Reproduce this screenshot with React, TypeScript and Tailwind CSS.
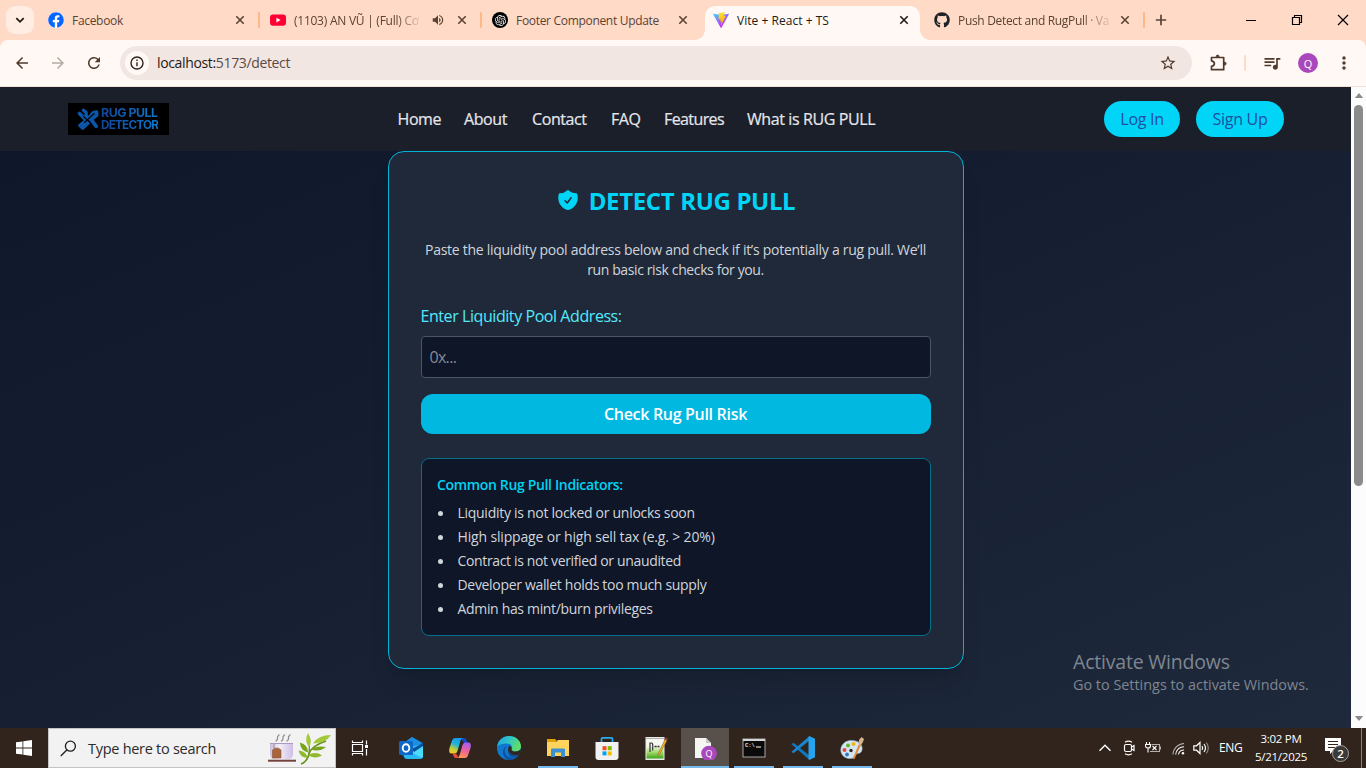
import React from "react";
import { HiShieldCheck } from "react-icons/hi2";
import { FaGithub, FaFacebook } from "react-icons/fa";
import { SiOpenai } from "react-icons/si";
import {
  MdArrowBack,
  MdArrowForward,
  MdRefresh,
  MdStarBorder,
  MdQueueMusic,
  MdMoreVert,
  MdVolumeUp,
} from "react-icons/md";

/* ---------- Browser icons ---------- */

function CloseX({ className = "" }: { className?: string }) {
  return (
    <svg viewBox="0 0 16 16" className={"h-4 w-4 shrink-0 " + className} fill="none" stroke="currentColor" strokeWidth="1.6">
      <path d="M4.3 4.3l7.4 7.4M11.7 4.3l-7.4 7.4" />
    </svg>
  );
}

function YoutubeIcon() {
  return (
    <svg viewBox="0 0 16 16" className="h-4 w-4 shrink-0">
      <rect x="0" y="2.4" width="16" height="11.4" rx="3" fill="#ff0033" />
      <path d="M6.4 5.7v4.8l4.2-2.4z" fill="#fff" />
    </svg>
  );
}

function ViteIcon() {
  return (
    <svg viewBox="0 0 256 257" className="h-4 w-4 shrink-0">
      <defs>
        <linearGradient id="viteA" x1="0%" x2="58%" y1="8%" y2="79%">
          <stop offset="0%" stopColor="#41D1FF" />
          <stop offset="100%" stopColor="#BD34FE" />
        </linearGradient>
        <linearGradient id="viteB" x1="43%" x2="50%" y1="2%" y2="89%">
          <stop offset="0%" stopColor="#FFEA83" />
          <stop offset="8%" stopColor="#FFDD35" />
          <stop offset="100%" stopColor="#FFA800" />
        </linearGradient>
      </defs>
      <path
        fill="url(#viteA)"
        d="M255.153 37.938L134.897 252.976c-2.483 4.44-8.862 4.466-11.382.048L.875 37.958c-2.746-4.814 1.371-10.646 6.827-9.67l120.385 21.517a6.537 6.537 0 0 0 2.322-.004l117.867-21.483c5.438-.991 9.574 4.796 6.877 9.62Z"
      />
      <path
        fill="url(#viteB)"
        d="M185.432.063L96.44 17.501a3.268 3.268 0 0 0-2.634 3.014l-5.474 92.456a3.268 3.268 0 0 0 3.997 3.378l24.777-5.718c2.318-.535 4.413 1.507 3.936 3.838l-7.361 36.047c-.495 2.426 1.782 4.5 4.151 3.78l15.304-4.649c2.372-.72 4.652 1.36 4.15 3.788l-11.698 56.621c-.732 3.542 3.979 5.473 5.943 2.437l1.313-2.028l72.516-144.72c1.215-2.423-.88-5.186-3.54-4.672l-25.505 4.922c-2.396.462-4.435-1.77-3.759-4.114l16.646-57.705c.677-2.35-1.37-4.583-3.769-4.113Z"
      />
    </svg>
  );
}

function PuzzleIcon() {
  return (
    <svg viewBox="0 0 18 18" className="h-[18px] w-[18px]" fill="none" stroke="#4f3a2c" strokeWidth="1.7" strokeLinejoin="round">
      <path d="M2.5 3.5h12.2v12.2H2.5v-3.4c2.2-.3 2.9-1.400 2.9-2.700S4.700 7.200 2.500 6.800z" />
      <path d="M7 2.700a1.600 1.600 0 0 1 3.200 0zM15.500 8a1.600 1.600 0 0 1 0 3.200z" fill="#4f3a2c" strokeWidth=".8" />
    </svg>
  );
}

/* ---------- Browser chrome ---------- */

function Tab({
  icon,
  title,
  audio,
  className,
  fade,
  textClass = "tracking-[-0.31px]",
}: {
  icon: React.ReactNode;
  title: string;
  audio?: boolean;
  className: string;
  fade?: boolean;
  textClass?: string;
}) {
  return (
    <div className={"flex h-7 shrink-0 items-center " + className}>
      {icon}
      <span className="ml-2 min-w-0 flex-1 whitespace-nowrap pt-px text-[12px] leading-4">
        <span
          className={
            "inline-block " + textClass + (fade ? " [mask-image:linear-gradient(to_right,#000_82%,rgba(0,0,0,.15)_100%)]" : "")
          }
        >
          {title}
        </span>
      </span>
      {audio && <MdVolumeUp className="mr-[9px] h-[14px] w-[14px] shrink-0" />}
      <CloseX />
    </div>
  );
}

function Separator() {
  return <div className="ml-[10px] h-4 w-[2px] shrink-0 rounded bg-[#ffb787]" />;
}

function TabStrip() {
  return (
    <div className="flex h-10 items-start bg-[#ffdbc7] text-[#5a4334]">
      <div className="ml-[6px] mt-[6px] flex h-7 w-7 items-center justify-center rounded-[9px] bg-[#ffede4]">
        <svg viewBox="0 0 10 10" className="h-[10px] w-[10px]" fill="none" stroke="#241a14" strokeWidth="1.8">
          <path d="M1.300 3.200L5 6.800l3.700-3.600" />
        </svg>
      </div>
      <div className="mt-[6px] flex h-7 w-[228px] items-center pl-[14px]">
        <Tab
          className="w-[200px]"
          icon={
            <span className="flex h-4 w-4 shrink-0 items-center justify-center rounded-full bg-white">
              <FaFacebook className="h-4 w-4 text-[#0866ff]" />
            </span>
          }
          title="Facebook"
        />
        <Separator />
      </div>
      <div className="mt-[6px] flex h-7 w-[222px] items-center pl-2">
        <Tab className="w-[200px]" icon={<YoutubeIcon />} title="(1103) AN VŨ | (Full) Cơ" audio fade textClass="tracking-[-0.25px]" />
        <Separator />
      </div>
      <div className="mt-[6px] flex h-7 w-[221px] items-center pl-2">
        <Tab
          className="w-[199px]"
          icon={
            <span className="flex h-4 w-4 shrink-0 items-center justify-center rounded-full bg-black">
              <SiOpenai className="h-[11px] w-[11px] text-white" />
            </span>
          }
          title="Footer Component Update"
        />
      </div>
      <div className="relative flex h-[34px] w-[215px] self-end rounded-t-[10px] bg-[#fff8f5] px-2 text-[#241a14]">
        <div className="absolute -left-[10px] bottom-0 h-[10px] w-[10px] bg-[radial-gradient(circle_at_0_0,#ffdbc7_9.5px,#fff8f5_10px)]" />
        <div className="absolute -right-[10px] bottom-0 h-[10px] w-[10px] bg-[radial-gradient(circle_at_100%_0,#ffdbc7_9.5px,#fff8f5_10px)]" />
        <Tab className="w-full" icon={<ViteIcon />} title="Vite + React + TS" textClass="tracking-[0.03px]" />
      </div>
      <div className="mt-[6px] flex h-7 w-[225px] items-center pl-[14px]">
        <Tab
          className="w-[199px]"
          icon={<FaGithub className="h-4 w-4 shrink-0 text-[#1f2328]" />}
          title="Push Detect and RugPull · Va"
          fade
          textClass="tracking-[-0.32px]"
        />
        <Separator />
      </div>
      <svg viewBox="0 0 12 12" className="ml-[10px] mt-[14px] h-3 w-3" stroke="#5a4334" strokeWidth="1.7">
        <path d="M6 .8v10.400M.8 6h10.400" />
      </svg>
      <div className="ml-auto mr-[17px] mt-[14px] flex gap-[34px] text-black">
        <svg viewBox="0 0 12 12" className="h-3 w-3" fill="none" stroke="currentColor">
          <path d="M1 6.500h10" />
        </svg>
        <svg viewBox="0 0 12 12" className="h-3 w-3" fill="none" stroke="currentColor" strokeWidth="1.200">
          <path d="M1.500 3.500h7v7h-7zM3.500 3.500v-2h7v7h-2" />
        </svg>
        <svg viewBox="0 0 12 12" className="h-3 w-3" fill="none" stroke="currentColor" strokeWidth="1.200">
          <path d="M1 1l10 10M11 1L1 11" />
        </svg>
      </div>
    </div>
  );
}

function Toolbar() {
  return (
    <div className="bg-[#ffdbc7]">
      <div className="flex h-[47px] items-center rounded-t-[8px] border-b border-[#f3dfd5] bg-[#fff8f5] text-[#4f3a2c]">
        <MdArrowBack className="ml-[13px] h-[18px] w-[18px]" />
        <MdArrowForward className="ml-[18px] h-[18px] w-[18px] text-[#b5a9a2]" />
        <MdRefresh className="ml-[18px] h-[18px] w-[18px]" />
        <div className="ml-[17px] flex h-[34px] w-[1072px] items-center rounded-full bg-[#f2e6e3] pl-[5px]">
          <div className="flex h-6 w-6 items-center justify-center rounded-full bg-[#fff8f5]">
            <svg viewBox="0 0 14 14" className="h-[14px] w-[14px]" fill="none" stroke="#30241e" strokeWidth="1.400">
              <circle cx="7" cy="7" r="6" />
              <path d="M7 6.200v4M7 3.600v1.500" />
            </svg>
          </div>
          <span className="ml-2 text-[14px] leading-5 tracking-[-0.35px] text-[#5a4b44]">
            <span className="text-[#1f1a17]">localhost:</span>5173/detect
          </span>
          <MdStarBorder className="ml-auto mr-[15px] h-[18px] w-[18px]" />
        </div>
        <div className="ml-[17px]">
          <PuzzleIcon />
        </div>
        <div className="ml-[17px] h-4 w-[2px] rounded bg-[#ffdbc7]" />
        <MdQueueMusic className="ml-[16px] h-5 w-5" />
        <div className="ml-[16px] flex h-5 w-5 items-center justify-center rounded-full bg-[#ab47bc] text-[11px] leading-none text-white">Q</div>
        <MdMoreVert className="ml-[16px] h-5 w-5" />
      </div>
    </div>
  );
}

/* ---------- Page ---------- */

function Logo() {
  return (
    <div className="ml-[68px] flex h-8 w-[101px] items-center bg-black pl-[9px]">
      <svg viewBox="0 0 22 22" className="h-[22px] w-[22px] shrink-0" fill="none" strokeLinecap="round" strokeLinejoin="round">
        <g stroke="#0b56a8" strokeWidth="3.600">
          <path d="M2.500 5.500l3.200 3.200L9.500 12.500l-6.500 5 2.700 2.500L11 15" />
          <path d="M6.500 2.500l2.500 2.200v3l3 2.800 3.800-5.500 3.700-1 .2 3.200-5.500 4.500 5 6.700" />
        </g>
        <path d="M4 3l3 3M6.500 8.500l7 6.500M7.500 14.500l9.500-9" stroke="#02060d" strokeWidth="1.100" />
      </svg>
      <div className="ml-[2px] bg-linear-to-r from-[#12459a] to-[#0b78cc] bg-clip-text font-['Inter',sans-serif] font-bold leading-[12px] text-transparent">
        <div className="whitespace-nowrap text-[12.3px] tracking-[-0.45px]">RUG PULL</div>
        <div className="whitespace-nowrap text-[11.7px] tracking-[-0.75px]">DETECTOR</div>
      </div>
    </div>
  );
}

function Navbar() {
  return (
    <header className="flex h-16 items-center bg-[#1b1f2a]">
      <Logo />
      <nav className="ml-[228.5px] flex text-[16px] font-medium leading-6 tracking-[-0.4px] text-[#e5e7eb] [-webkit-text-stroke:0.2px_#e5e7eb]">
        <a className="w-[66.500px]">Home</a>
        <a className="w-[68px]">About</a>
        <a className="w-[79px]">Contact</a>
        <a className="w-[53px]">FAQ</a>
        <a className="w-[83px] tracking-[-0.6px]">Features</a>
        <a className="whitespace-nowrap">What is RUG PULL</a>
      </nav>
      <div className="ml-auto mr-[67px] flex gap-4 text-[16px] leading-5 tracking-[-0.3px] text-[#1e4fa3]">
        <button className="h-9 w-[76px] rounded-full bg-[#00d5f7]">Log In</button>
        <button className="h-9 w-[88px] rounded-full bg-[#00d5f7]">Sign Up</button>
      </div>
    </header>
  );
}

const indicators = [
  { text: "Liquidity is not locked or unlocks soon", track: "tracking-[-0.28px]" },
  { text: "High slippage or high sell tax (e.g. > 20%)", track: "tracking-[-0.16px]" },
  { text: "Contract is not verified or unaudited", track: "tracking-[-0.35px]" },
  { text: "Developer wallet holds too much supply", track: "tracking-[-0.32px]" },
  { text: "Admin has mint/burn privileges", track: "tracking-[-0.33px]" },
];

function DetectCard() {
  return (
    <section className="h-[518px] w-[576px] rounded-2xl border border-[#00b4d8] bg-[#1f293a] px-8 shadow-xl">
      <h1 className="mt-[33px] flex h-8 items-center justify-center text-[24px] font-bold leading-8 text-[#00d5f7]">
        <HiShieldCheck className="mr-[9px] h-6 w-6 -translate-y-px" />
        <span className="whitespace-nowrap tracking-[-0.35px]">DETECT RUG PULL</span>
      </h1>
      <p className="mt-[23px] text-center text-[14px] leading-5 tracking-[-0.275px] text-[#d1d5db]">
        Paste the liquidity pool address below and check if it’s potentially a rug pull. We’ll
        <br />
        <span className="tracking-[-0.38px]">run basic risk checks for you.</span>
      </p>
      <label className="mt-6 block text-[16px] leading-6 tracking-[-0.43px] text-[#53eafd]">Enter Liquidity Pool Address:</label>
      <div className="mt-2 flex h-[42px] items-center rounded-[4px] border border-[#4a5565] bg-[#0e1628] px-2 text-[16px] tracking-[-0.7px] text-[#858b96]">0x...</div>
      <button className="mt-4 block h-10 w-full rounded-xl bg-[#00b8e0] text-[16px] font-semibold leading-6 tracking-[-0.31px] text-white">
        Check Rug Pull Risk
      </button>
      <div className="mt-6 h-[178px] rounded-lg border border-[#02708a] bg-[#0e1628] px-[15.5px] pt-4 text-[14px] leading-5 text-[#d1d5db]">
        <h2 className="font-semibold tracking-[-0.34px] text-[#00d3f2]">Common Rug Pull Indicators:</h2>
        <ul className="mt-2 flex flex-col gap-1">
          {indicators.map(({ text, track }) => (
            <li key={text} className={"flex items-center " + track}>
              <span className="ml-[0.5px] mr-[15px] h-[5px] w-[5px] rounded-full bg-[#d1d5db]" />
              {text}
            </li>
          ))}
        </ul>
      </div>
    </section>
  );
}

function Page() {
  return (
    <div className="flex h-[641px]">
      <div className="relative flex w-[1351px] flex-col bg-[#101828]">
        <Navbar />
        <main className="flex flex-1 justify-center bg-linear-to-br from-[#0f172a] to-[#1e293b]">
          <DetectCard />
        </main>
        <div className="absolute left-[1073px] top-[562px] whitespace-nowrap text-[#7f8691]">
          <div className="text-[19.5px] leading-[26px] tracking-[-0.2px]">Activate Windows</div>
          <div className="text-[14.4px] leading-5">Go to Settings to activate Windows.</div>
        </div>
      </div>
      <div className="flex w-[15px] flex-col items-center bg-[#fcfcfc]">
        <svg viewBox="0 0 10 6" className="mt-[6px] h-[5px] w-[10px] fill-[#8b8b8b]">
          <path d="M5 0l5 6H0z" />
        </svg>
        <div className="mt-[7px] h-[381px] w-[9px] rounded-full bg-[#8b8b8b]" />
        <svg viewBox="0 0 10 6" className="mb-[7px] mt-auto h-[5px] w-[10px] fill-[#8b8b8b]">
          <path d="M5 6l5-6H0z" />
        </svg>
      </div>
    </div>
  );
}

/* ---------- Taskbar ---------- */

function AppCell({ children, running, active }: { children: React.ReactNode; running?: boolean; active?: boolean }) {
  return (
    <div className={"flex h-10 flex-col items-center " + (active ? "ml-px w-12 bg-[#58504b]" : "w-[49px]")}>
      <div className="flex h-[38px] items-center pt-[2px]">{children}</div>
      {(running || active) && <div className={"h-[2px] bg-[#76b9ed] " + (active ? "w-full" : "w-10")} />}
    </div>
  );
}

const ico = "h-6 w-6";

function Outlook() {
  return (
    <svg viewBox="0 0 24 24" className={ico}>
      <path d="M3 8L13 1l11 6v13l-2 2H6l-3-3z" fill="#1066b5" />
      <path d="M6 6l7-5 10 6-10 7z" fill="#1b8fe0" />
      <path d="M5 12l19-4v12q0 3-3 3H8q-3 0-3-3z" fill="#28b9f2" />
      <path d="M24 8L12 16l11 6q1-1 1-2z" fill="#4bdcf8" />
      <path d="M13 13l11-6v3l-9 6z" fill="#0b4f9e" />
      <rect y="5" width="14" height="14" rx="1.500" fill="#0f67c8" />
      <ellipse cx="7" cy="12" rx="3.300" ry="3.800" fill="none" stroke="#fff" strokeWidth="1.900" />
    </svg>
  );
}

function Copilot() {
  return (
    <svg viewBox="0 0 24 24" className={ico}>
      <defs>
        <linearGradient id="cpA" x1=".6" y1="0" x2=".2" y2="1">
          <stop offset="0" stopColor="#1599ee" />
          <stop offset=".4" stopColor="#21b5d8" />
          <stop offset=".7" stopColor="#b8cf3a" />
          <stop offset="1" stopColor="#ffc928" />
        </linearGradient>
        <linearGradient id="cpB" x1=".6" y1="0" x2=".3" y2="1">
          <stop offset="0" stopColor="#a45ff0" />
          <stop offset=".5" stopColor="#f0609a" />
          <stop offset="1" stopColor="#ff9a55" />
        </linearGradient>
      </defs>
      <path d="M13 2h3q2 0 2.700 2.500L19.500 7H16z" fill="#1748c8" />
      <path d="M7 2h8q-2 .5-2.800 3.500L9.500 15q-.8 2.500-3 2.500H4Q0 17.500 1.500 12L4 4.500Q4.800 2 7 2z" fill="url(#cpA)" />
      <path d="M17 22H9q2-.5 2.800-3.500L14.500 9q.8-2.500 3-2.500H20q4 0 2.500 5.500L20 19.500Q19.200 22 17 22z" fill="url(#cpB)" />
      <path d="M11 22H8q-2 0-2.700-2.500L4.700 17.500H8z" fill="#f04a35" />
    </svg>
  );
}

function Edge() {
  return (
    <svg viewBox="0 0 24 24" className={ico}>
      <defs>
        <linearGradient id="edA" x1="0" y1=".2" x2="1" y2=".5">
          <stop offset="0" stopColor="#1fa5e0" />
          <stop offset=".5" stopColor="#2fc7c5" />
          <stop offset="1" stopColor="#67e05c" />
        </linearGradient>
      </defs>
      <circle cx="12" cy="12" r="12" fill="#1079cf" />
      <path d="M0 11C1 4 6 0 12 0c7 0 12 5 12 10.500 0 3-2.500 5-5.500 5-2.500 0-4.500-1-4-2.500 1.500-2.500-.5-5.500-4.500-5.500C5 7.500 1 9 0 11z" fill="url(#edA)" />
      <path d="M10 10c-3 2-3 7 0 10 3 2.600 8 2.300 11.500-.5C19 23 15 24 12 24 8 23 5.500 19 6 15c.3-2.500 2-4.500 4-5z" fill="#104f9c" />
      <path d="M14.500 13c-.5 1.500 1.500 2.500 4 2.500 2 0 3.800-.7 5-2.500.8 2-.5 5-2 6.500-4 2-8.500.500-10-3-.8-2-.2-5 .500-6.500 2 0 3 1.500 2.500 3z" fill="#30241c" />
      <path d="M12 14c0 4 5 6 9.800 4.300-1 1.700-3.600 3.200-6.300 2.900-3.600-.5-5-4.200-3.500-7.200z" fill="#104f9c" />
    </svg>
  );
}

function Explorer() {
  return (
    <svg viewBox="0 0 24 24" className={ico}>
      <path d="M1 3h8l2 2h-1v3H1z" fill="#e3a008" />
      <path d="M1 6h9l2-2h11v16H1z" fill="#ffd45c" />
      <path d="M5 13.500q0-1 1-1h12q1 0 1 1V21h-4v-4.500H9V21H5z" fill="#3b8fd4" />
    </svg>
  );
}

function Store() {
  return (
    <svg viewBox="0 0 24 24" className={ico}>
      <path d="M6.500 6V3q0-1.200 1.200-1.200h8.600q1.200 0 1.200 1.200v3" fill="none" stroke="#28aef0" strokeWidth="1.700" />
      <path d="M.5 6h23v15q0 3-3 3h-17q-3 0-3-3z" fill="#f1f1f1" />
      <path d="M7.500 10.200h4v4h-4z" fill="#f25022" />
      <path d="M12.700 10.200h4v4h-4z" fill="#7fba00" />
      <path d="M7.500 15.400h4v4h-4z" fill="#00a4ef" />
      <path d="M12.700 15.400h4v4h-4z" fill="#ffb900" />
    </svg>
  );
}

function NotepadPlus() {
  return (
    <svg viewBox="0 0 24 24" className={ico}>
      <defs>
        <linearGradient id="npp" x1="0" y1="0" x2="0" y2="1">
          <stop offset=".35" stopColor="#f4f8f0" />
          <stop offset=".7" stopColor="#9ed865" />
          <stop offset="1" stopColor="#3fa51a" />
        </linearGradient>
      </defs>
      <rect x="1.500" y="1" width="19" height="23" fill="#e9ebe8" />
      <rect x="2.500" y="3" width="17" height="19.500" fill="url(#npp)" />
      <path d="M2.500 2.500h17" stroke="#777" strokeDasharray="1 1" />
      <path d="M6 16V7h1.200q1.500 0 1.500 1.500v6" fill="none" stroke="#333" strokeWidth="1.200" />
      <path d="M10.500 10.500h2.200M13.500 10.500h2" stroke="#333" strokeWidth="1.300" />
      <path d="M14 18l7-14.500 2 1L16 17.500l-2 2z" fill="#f0b429" stroke="#87541d" strokeWidth=".5" />
      <path d="M21 3.500l.9-2 2 1-.9 2z" fill="#a64036" />
    </svg>
  );
}

function ProfilePage() {
  return (
    <svg viewBox="0 0 24 24" className={ico}>
      <path d="M2 2h11l5 5v15H2z" fill="#f5f5f3" />
      <path d="M13 2l5 5h-5z" fill="#c9c5c2" />
      <circle cx="16" cy="17.500" r="7.800" fill="#ab47bc" />
      <text x="16" y="20.700" textAnchor="middle" fontSize="9" fill="#fff">Q</text>
    </svg>
  );
}

function Cmd() {
  return (
    <svg viewBox="0 0 24 24" className={ico}>
      <rect x="1" y="3" width="22" height="18" fill="#0a0a0a" stroke="#a7a7a7" />
      <path d="M1 3h22v2H1z" fill="#d5d5d5" />
      <text x="3" y="11.300" fontSize="5.500" fill="#e5e5e5" fontFamily="Liberation Mono, monospace" fontWeight="bold">C:\</text>
      <path d="M14 11h5" stroke="#fff" />
    </svg>
  );
}

function VsCode() {
  return (
    <svg viewBox="0 0 24 24" className={ico}>
      <path d="M.5 8.200l2-1.500 16 12.700V24z" fill="#0f77bd" />
      <path d="M.5 15.800l2 1.500L18.500 4.500V0z" fill="#1785cf" />
      <path d="M18.200 0L24 2.800v18.400L18.200 24l-.7-1V1z" fill="#27a3ee" />
    </svg>
  );
}

function Paint() {
  return (
    <svg viewBox="0 0 24 24" className={ico}>
      <path d="M1 16C-.5 9 6 3.500 12.500 4.500 19 5 23 9 22 14c-1 4-4 3-6 4-2 1.500-1 4-5 4.500C6 23 2 20 1 16z" fill="#d3e6f2" stroke="#93b4c9" strokeWidth=".6" />
      <circle cx="4.500" cy="14" r="2" fill="#e04a3f" />
      <circle cx="8" cy="9.500" r="2" fill="#63b72d" />
      <circle cx="13.500" cy="8" r="2" fill="#f2b21b" />
      <circle cx="11" cy="14.500" r="1.700" fill="#30241c" />
      <circle cx="7" cy="18.500" r="1.900" fill="#2f77c9" />
      <path d="M12.500 23L19 8l2 1-6.500 14z" fill="#e08b3c" />
      <path d="M18.500 8L19 4l2.500-3L24 3l-1 3-2 3z" fill="#d6b58c" />
    </svg>
  );
}

function TeaAndLeaves() {
  return (
    <svg viewBox="0 0 64 34" className="h-[34px] w-16">
      <defs>
        <linearGradient id="mug" x1="0" y1="0" x2="1" y2="0">
          <stop offset="0" stopColor="#c9bddd" />
          <stop offset=".4" stopColor="#f3eefb" />
          <stop offset="1" stopColor="#cdbfe4" />
        </linearGradient>
      </defs>
      <g fill="none" stroke="#8d8d93" strokeWidth="1.300" strokeLinecap="round">
        <path d="M8 8q2-1.500 1.500-3T11 2M13.500 8q2-1.500 1.500-3T16.500 2M19 8q2-1.500 1.500-3T22 2" />
      </g>
      <path d="M2 10h23v10.500Q25 26 20 26H7q-5 0-5-5.500z" fill="url(#mug)" />
      <path d="M2 10h23v1H2z" fill="#a99bc0" />
      <path d="M6 11v4M4.500 17l2-1.800h4L13 17v8H4.500z" fill="#a8663d" stroke="#8f5330" strokeWidth=".6" />
      <path d="M0 26.700h28v2H0z" fill="#74423e" />
      <path d="M33 31Q39 29 41 21T58 8" fill="none" stroke="#679019" strokeWidth="1.600" />
      <path d="M40.500 24Q42 14 41 8" fill="none" stroke="#679019" strokeWidth="1.200" />
      <path d="M41 14q-5-6-1-14 5 8 1 14z" fill="#a1c938" />
      <path d="M40 19.500q-8-2-8-10 8 2 8 10z" fill="#76a51b" />
      <path d="M39.500 25q-8-1-9-7.500 8 .5 9 7.500z" fill="#8eba2c" />
      <path d="M45 10.500q5-8.500 18-8.500-5 8-18 8.500z" fill="#a1c938" />
      <path d="M43 16.500q6-4.500 15-2.500-7 5.500-15 2.500z" fill="#76a51b" />
      <path d="M40 22q8-4 14 .5-8 4-14-.5z" fill="#8eba2c" />
    </svg>
  );
}

function Taskbar() {
  return (
    <div className="flex h-10 bg-[#30241c] text-white">
      <div className="flex w-12 items-center justify-center">
        <svg viewBox="0 0 16 16" className="h-4 w-4" fill="#fff">
          <path d="M0 2.300l6.500-.9v6.200H0zM7.300 1.300L16 0v7.600H7.300zM0 8.400h6.500v6.200L0 13.700zM7.300 8.400H16V16l-8.700-1.300z" />
        </svg>
      </div>
      <div className="flex w-[288px] items-center border border-[#c5c3c1] bg-[#f2f2f2] text-[#2b2b2b]">
        <svg viewBox="0 0 18 18" className="ml-[11px] h-[17px] w-[17px]" fill="none" stroke="#1f1f1f" strokeWidth="1.400">
          <circle cx="11" cy="6.500" r="5.300" />
          <path d="M7.200 10.500L.8 17" />
        </svg>
        <span className="ml-[11px] whitespace-nowrap pt-px text-[14.5px] leading-5 tracking-[-0.28px]">Type here to search</span>
        <div className="ml-auto mr-[3px] mt-[3px]">
          <TeaAndLeaves />
        </div>
      </div>
      <div className="flex w-[50px] items-center justify-center pr-[2px]">
        <svg viewBox="0 0 18 18" className="h-[18px] w-[18px]" fill="none" stroke="#fff" strokeWidth="1.200">
          <path d="M1.500 1.500v2h10v-2M1.500 16.500v-2h10v2M1.500 5.500h10v7h-10zM15.500 1.500v4M15.500 10v6.500" />
          <path d="M14 6h3v3h-3z" fill="#fff" stroke="none" />
        </svg>
      </div>
      <AppCell><Outlook /></AppCell>
      <AppCell><Copilot /></AppCell>
      <AppCell><Edge /></AppCell>
      <AppCell running><Explorer /></AppCell>
      <AppCell><Store /></AppCell>
      <AppCell><NotepadPlus /></AppCell>
      <AppCell active><ProfilePage /></AppCell>
      <AppCell running><Cmd /></AppCell>
      <AppCell running><VsCode /></AppCell>
      <AppCell running><Paint /></AppCell>
      <div className="ml-auto flex items-center">
        <svg viewBox="0 0 12 12" className="mr-[12px] h-3 w-3" fill="none" stroke="#fff" strokeWidth="1.400">
          <path d="M.500 8.800L6 3.300l5.500 5.500" />
        </svg>
        <svg viewBox="0 0 12 16" className="mr-[10px] h-4 w-3" fill="none" stroke="#fff" strokeWidth="1.200">
          <rect x="1.500" y="4.500" width="7" height="7" rx="1.500" />
          <path d="M8.500 7l2.500-1.500v5L8.500 9M2 2.200q3.500-2 7 0M2 13.800q3.500 2 7 0" />
        </svg>
        <svg viewBox="0 0 16 12" className="mr-[11px] h-3 w-4" fill="none" stroke="#fff" strokeWidth="1.100">
          <path d="M1.500 0v2.500M4.500 0v2.500M.5 2.500h5v1.500q0 2-2.500 2T.500 4zM3 6v4.500" />
          <path d="M6.500 2.500H14.500v7H5M14.500 5h1v2h-1" stroke="#b5b0ac" />
          <path d="M7.500 4l4 4M11.500 4l-4 4" />
        </svg>
        <svg viewBox="0 0 14 14" className="mr-[8px] h-[13px] w-[13px]" fill="none" stroke="#fff" strokeWidth="1.100">
          <path d="M1 13.500A12.500 12.500 0 0 1 13 1.500" stroke="#b5b0ac" />
          <path d="M4 13.500A9 9 0 0 1 13 5M7 13.500A6 6 0 0 1 13 8.500" />
          <circle cx="11.800" cy="12.200" r="1.300" fill="#fff" stroke="none" />
        </svg>
        <svg viewBox="0 0 16 14" className="mr-[10px] h-[14px] w-4" fill="none" stroke="#fff" strokeWidth="1.200">
          <path d="M.8 4.800h2.700L7 1.500v11L3.500 9.200H.8z" />
          <path d="M9 5q1.500 2 0 4M11 3q3 4 0 8" />
          <path d="M13.300 1.500q4 5.500 0 11" stroke="#8d8680" />
        </svg>
        <span className="w-[24px] text-[12px] leading-4 tracking-[-0.4px]">ENG</span>
        <div className="ml-[11px] w-[54px] whitespace-nowrap text-center text-[11.5px] leading-[18px] tracking-[-0.25px]">
          <div className="-ml-1 -mr-1">3:02 PM</div>
          <div className="-ml-1 -mr-1">5/21/2025</div>
        </div>
        <div className="relative ml-[17px] mr-[18px] h-5 w-[18px]">
          <svg viewBox="0 0 16 16" className="h-4 w-4">
            <path d="M0 0h16v13H8l-3 3v-3H0z" fill="#fff" />
            <path d="M3 3.500h10M3 6.500h10M3 9.500h7" stroke="#30241c" />
          </svg>
          <span className="absolute left-[7px] top-[7px] flex h-[17px] w-[17px] items-center justify-center rounded-full border border-[#a8a29c] bg-[#3c3a38] text-[11.5px] font-semibold leading-none">2</span>
        </div>
        <div className="mr-1 h-10 w-px bg-[#8a817b]" />
      </div>
    </div>
  );
}

export default function App() {
  return (
    <div className="flex h-[768px] w-[1366px] flex-col overflow-hidden font-['Open_Sans','Noto_Sans',sans-serif]">
      <TabStrip />
      <Toolbar />
      <Page />
      <Taskbar />
    </div>
  );
}
